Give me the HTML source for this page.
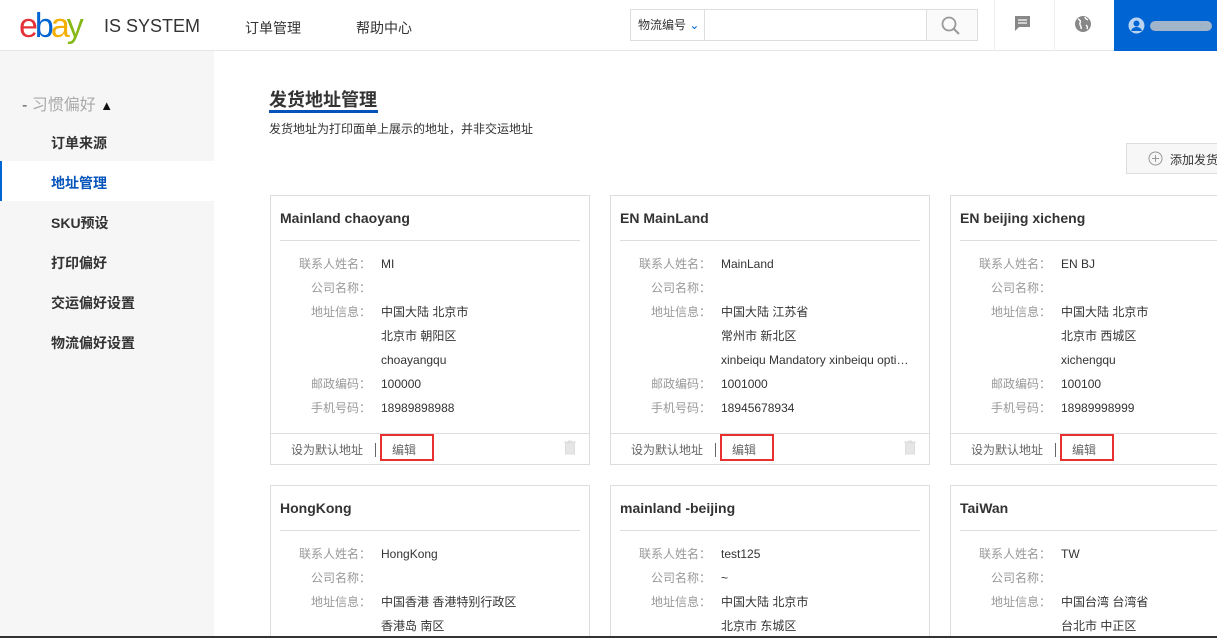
<!DOCTYPE html>
<html style="width:1217px;height:638px;overflow:hidden"><head><meta charset="utf-8"><style>
*{margin:0;padding:0;box-sizing:border-box}
body{width:1217px;height:638px;overflow:hidden;background:#fff;font-family:"Liberation Sans","Noto Sans CJK SC",sans-serif;color:#333;position:relative;font-size:12px}
.a{position:absolute}
.hdr{left:0;top:0;width:1217px;height:51px;border-bottom:1px solid #e5e5e5;background:#fff}
.side{left:0;top:51px;width:214px;height:587px;background:#f6f6f6}
.nav{position:absolute;left:51px;font-size:14px;font-weight:bold;color:#333}
.card{position:absolute;width:320px;border:1px solid #ddd;background:#fff}
.card h3{position:absolute;left:9px;top:14px;font-size:14px;font-weight:bold;color:#333}
.card .dv{position:absolute;left:9px;right:9px;top:44px;border-top:1px solid #ddd}
.row{position:absolute;left:0;font-size:12px;height:24px;line-height:24px}
.row .l{position:absolute;left:0;width:100px;text-align:right;color:#999;white-space:nowrap}
.row .v{position:absolute;left:110px;color:#333;white-space:nowrap;width:200px;overflow:hidden;text-overflow:ellipsis}
.ft{position:absolute;left:0;right:0;top:237px;height:31px;border-top:1px solid #ddd}
.ft .d{position:absolute;left:20px;top:7px;color:#666}
.ft .s{position:absolute;left:104px;top:9px;height:14px;border-left:1px solid #666}
.ft .e{position:absolute;left:109px;top:0;width:54px;height:27px;border:2px solid #e8312f;color:#666;padding:5px 0 0 10px}
.ft .t{position:absolute;left:293px;top:6px}
</style></head><body>
<div class="a hdr"></div>
<div class="a" style="left:19px;top:6px;font-size:34px;letter-spacing:-3px;font-family:'Liberation Sans',sans-serif;line-height:40px"><span style="color:#e53238">e</span><span style="color:#0064d2">b</span><span style="color:#f5af02">a</span><span style="color:#86b817">y</span></div>
<div class="a" style="left:104px;top:16px;font-size:18px;color:#333">IS SYSTEM</div>
<div class="a" style="left:245px;top:18px;font-size:14px;color:#333">订单管理</div>
<div class="a" style="left:356px;top:18px;font-size:14px;color:#333">帮助中心</div>
<div class="a" style="left:630px;top:9px;width:348px;height:32px;border:1px solid #ddd;background:#fff"></div>
<div class="a" style="left:638px;top:16px;font-size:12px;color:#333">物流编号 <span style="color:#0064d2">&#8964;</span></div>
<div class="a" style="left:704px;top:10px;height:30px;border-left:1px solid #ddd"></div>
<div class="a" style="left:926px;top:10px;width:51px;height:30px;border-left:1px solid #ddd;background:#fafafa"></div>
<svg class="a" style="left:940px;top:15px" width="22" height="22" viewBox="0 0 22 22"><circle cx="9" cy="9" r="6.5" fill="none" stroke="#999" stroke-width="1.8"/><path d="M13.5 13.5L19 19" stroke="#999" stroke-width="2"/></svg>
<div class="a" style="left:994px;top:0;height:51px;border-left:1px solid #eee"></div>
<div class="a" style="left:1054px;top:0;height:51px;border-left:1px solid #eee"></div>
<svg class="a" style="left:1014px;top:15px" width="18" height="18" viewBox="0 0 18 18"><path d="M1 1h15v11H5l-4 4z" fill="#888"/><path d="M4 5h9M4 8h9" stroke="#fff" stroke-width="1.2"/></svg>
<svg class="a" style="left:1074px;top:15px" width="18" height="18" viewBox="0 0 18 18"><circle cx="9" cy="9" r="8" fill="#888"/><path d="M4 4c2 1 3 2 2 4s2 3 1 6M11 2c0 2 2 2 3 3M12 10c1 1 2 2 1 4" stroke="#fff" stroke-width="1.4" fill="none"/></svg>
<div class="a" style="left:1114px;top:0;width:103px;height:51px;background:#0064d2"></div>
<svg class="a" style="left:1128px;top:17px" width="17" height="17" viewBox="0 0 17 17"><circle cx="8.5" cy="8.5" r="8" fill="#b9d3f3"/><circle cx="8.5" cy="6.5" r="3" fill="#0064d2"/><path d="M3 14c1-3 3-4 5.5-4s4.5 1 5.5 4" fill="#0064d2"/></svg>
<div class="a" style="left:1150px;top:21px;width:62px;height:10px;border-radius:5px;background:#c8c8c8;opacity:.8"></div>

<div class="a side"></div>
<div class="a" style="left:22px;top:91px;font-size:16px;color:#aaa"><span style="color:#555">-</span> 习惯偏好 <span style="color:#111;font-size:13px">&#9650;</span></div>
<div class="nav" style="top:133px">订单来源</div>
<div class="a" style="left:0;top:161px;width:214px;height:40px;background:#fff;border-left:2px solid #0064d2"></div>
<div class="nav" style="top:173px;color:#0654ba">地址管理</div>
<div class="nav" style="top:213px">SKU预设</div>
<div class="nav" style="top:253px">打印偏好</div>
<div class="nav" style="top:293px">交运偏好设置</div>
<div class="nav" style="top:333px">物流偏好设置</div>

<div class="a" style="left:269px;top:86px;font-size:18px;font-weight:bold;color:#333">发货地址管理</div>
<div class="a" style="left:269px;top:110px;width:109px;height:3px;background:#0654ba"></div>
<div class="a" style="left:269px;top:120px;font-size:12px;color:#333">发货地址为打印面单上展示的地址，并非交运地址</div>
<div class="a" style="left:1126px;top:143px;width:100px;height:31px;border:1px solid #ddd;background:#f7f7f7"></div>
<svg class="a" style="left:1148px;top:151px" width="15" height="15" viewBox="0 0 15 15"><circle cx="7.5" cy="7.5" r="6.5" fill="none" stroke="#999"/><path d="M4 7.5h7M7.5 4v7" stroke="#999"/></svg>
<div class="a" style="left:1170px;top:151px;font-size:12px;color:#333;white-space:nowrap">添加发货</div>

<div class="card" style="left:270px;top:195px;height:270px"><h3>Mainland chaoyang</h3><div class="dv"></div>
<div class="row" style="top:56px"><span class="l">联系人姓名：</span><span class="v">MI</span></div>
<div class="row" style="top:80px"><span class="l">公司名称：</span></div>
<div class="row" style="top:104px"><span class="l">地址信息：</span><span class="v">中国大陆 北京市</span></div>
<div class="row" style="top:128px"><span class="v">北京市 朝阳区</span></div>
<div class="row" style="top:152px"><span class="v">choayangqu</span></div>
<div class="row" style="top:176px"><span class="l">邮政编码：</span><span class="v">100000</span></div>
<div class="row" style="top:200px"><span class="l">手机号码：</span><span class="v">18989898988</span></div>
<div class="ft"><span class="d">设为默认地址</span><span class="s"></span><span class="e">编辑</span><svg class="t" width="12" height="15" viewBox="0 0 12 15"><path d="M0 2h12M4 1h4M1.5 3h9v11h-9z" fill="#e6e6e6" stroke="#ddd"/></svg></div></div>

<div class="card" style="left:610px;top:195px;height:270px"><h3>EN MainLand</h3><div class="dv"></div>
<div class="row" style="top:56px"><span class="l">联系人姓名：</span><span class="v">MainLand</span></div>
<div class="row" style="top:80px"><span class="l">公司名称：</span></div>
<div class="row" style="top:104px"><span class="l">地址信息：</span><span class="v">中国大陆 江苏省</span></div>
<div class="row" style="top:128px"><span class="v">常州市 新北区</span></div>
<div class="row" style="top:152px"><span class="v" style="width:192px">xinbeiqu Mandatory xinbeiqu optional</span></div>
<div class="row" style="top:176px"><span class="l">邮政编码：</span><span class="v">1001000</span></div>
<div class="row" style="top:200px"><span class="l">手机号码：</span><span class="v">18945678934</span></div>
<div class="ft"><span class="d">设为默认地址</span><span class="s"></span><span class="e">编辑</span><svg class="t" width="12" height="15" viewBox="0 0 12 15"><path d="M0 2h12M4 1h4M1.5 3h9v11h-9z" fill="#e6e6e6" stroke="#ddd"/></svg></div></div>

<div class="card" style="left:950px;top:195px;height:270px"><h3>EN beijing xicheng</h3><div class="dv"></div>
<div class="row" style="top:56px"><span class="l">联系人姓名：</span><span class="v">EN BJ</span></div>
<div class="row" style="top:80px"><span class="l">公司名称：</span></div>
<div class="row" style="top:104px"><span class="l">地址信息：</span><span class="v">中国大陆 北京市</span></div>
<div class="row" style="top:128px"><span class="v">北京市 西城区</span></div>
<div class="row" style="top:152px"><span class="v">xichengqu</span></div>
<div class="row" style="top:176px"><span class="l">邮政编码：</span><span class="v">100100</span></div>
<div class="row" style="top:200px"><span class="l">手机号码：</span><span class="v">18989998999</span></div>
<div class="ft"><span class="d">设为默认地址</span><span class="s"></span><span class="e">编辑</span></div></div>

<div class="card" style="left:270px;top:485px;height:160px"><h3>HongKong</h3><div class="dv"></div>
<div class="row" style="top:56px"><span class="l">联系人姓名：</span><span class="v">HongKong</span></div>
<div class="row" style="top:80px"><span class="l">公司名称：</span></div>
<div class="row" style="top:104px"><span class="l">地址信息：</span><span class="v">中国香港 香港特别行政区</span></div>
<div class="row" style="top:128px"><span class="v">香港岛 南区</span></div></div>

<div class="card" style="left:610px;top:485px;height:160px"><h3>mainland -beijing</h3><div class="dv"></div>
<div class="row" style="top:56px"><span class="l">联系人姓名：</span><span class="v">test125</span></div>
<div class="row" style="top:80px"><span class="l">公司名称：</span><span class="v">~</span></div>
<div class="row" style="top:104px"><span class="l">地址信息：</span><span class="v">中国大陆 北京市</span></div>
<div class="row" style="top:128px"><span class="v">北京市 东城区</span></div></div>

<div class="card" style="left:950px;top:485px;height:160px"><h3>TaiWan</h3><div class="dv"></div>
<div class="row" style="top:56px"><span class="l">联系人姓名：</span><span class="v">TW</span></div>
<div class="row" style="top:80px"><span class="l">公司名称：</span></div>
<div class="row" style="top:104px"><span class="l">地址信息：</span><span class="v">中国台湾 台湾省</span></div>
<div class="row" style="top:128px"><span class="v">台北市 中正区</span></div></div>

<div class="a" style="left:0;top:636px;width:1217px;height:2px;background:#333"></div>
</body></html>
